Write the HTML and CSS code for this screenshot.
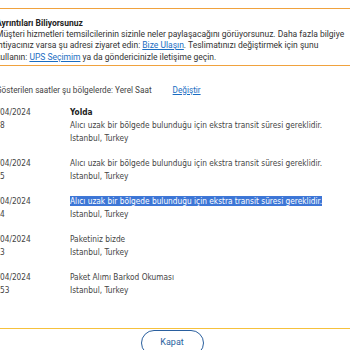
FILE: index.html
```html
<!DOCTYPE html>
<html lang="tr">

<head>
    <meta charset="UTF-8">
    <meta name="viewport" content="width=device-width, initial-scale=1.0">
    <title>Gönderi Ayrıntıları</title>
    <link rel="stylesheet" href="styles.css">
</head>

<body>
    <div class="page">
        <!-- Bilgi kutusu -->
        <section class="notice">
            <div class="notice-body">
                <h3 class="notice-title">Ayrıntıları Biliyorsunuz</h3>
                <p class="notice-text">
                    Müşteri hizmetleri temsilcilerinin sizinle neler paylaşacağını görüyorsunuz. Daha fazla bilgiye<br>
                    ihtiyacınız varsa şu adresi ziyaret edin: <a href="#">Bize Ulaşın</a>. Teslimatınızı değiştirmek için şunu<br>
                    kullanın: <a href="#">UPS Seçimim</a> ya da göndericinizle iletişime geçin.
                </p>
            </div>
        </section>

        <p class="timezone">Gösterilen saatler şu bölgelerde: Yerel Saat <a href="#" class="change">Değiştir</a></p>

        <!-- Gönderi geçmişi -->
        <div class="history">
            <div class="row">
                <div class="when">17/04/2024<br>9:58</div>
                <div class="what">
                    <strong>Yolda</strong><br>
                    Alıcı uzak bir bölgede bulunduğu için ekstra transit süresi gereklidir.<br>
                    Istanbul, Turkey
                </div>
            </div>
            <div class="row">
                <div class="when">16/04/2024<br>9:55</div>
                <div class="what">
                    Alıcı uzak bir bölgede bulunduğu için ekstra transit süresi gereklidir.<br>
                    Istanbul, Turkey
                </div>
            </div>
            <div class="row">
                <div class="when">15/04/2024<br>9:54</div>
                <div class="what">
                    <span class="selected">Alıcı uzak bir bölgede bulunduğu için ekstra transit süresi gereklidir.</span><br>
                    Istanbul, Turkey
                </div>
            </div>
            <div class="row">
                <div class="when">12/04/2024<br>9:03</div>
                <div class="what">
                    Paketiniz bizde<br>
                    Istanbul, Turkey
                </div>
            </div>
            <div class="row">
                <div class="when">11/04/2024<br>10:53</div>
                <div class="what">
                    Paket Alımı Barkod Okuması<br>
                    Istanbul, Turkey
                </div>
            </div>
        </div>

        <footer class="actions">
            <button class="close-button">Kapat</button>
        </footer>
    </div>
</body>

</html>
```
FILE: styles.css
```css
/* Genel */
body {
    margin: 0;
    padding: 0;
    background-color: #fff;
    font-family: Roboto, "Liberation Sans", sans-serif;
    color: #333;
    overflow: hidden;
}

.page {
    padding-top: 8px;
}

a {
    color: #1a6dc2;
    text-decoration: underline;
}

/* Bilgi kutusu */
.notice {
    border-top: 1px solid #f0a23e;
    border-bottom: 1px solid #f0a23e;
    padding: 8px 0 2px;
}

.notice-body {
    margin-left: -4px;
    white-space: nowrap;
}

.notice-title {
    margin: 0;
    font-size: 8.5px;
    line-height: 12px;
    font-weight: bold;
    color: #222;
}

.notice-text {
    margin: 0;
    font-size: 8.5px;
    line-height: 11.3px;
    color: #333;
}

/* Saat dilimi */
.timezone {
    margin: 18px 0 0 -4px;
    font-size: 8.2px;
    line-height: 12px;
    color: #444;
    white-space: nowrap;
}

.change {
    margin-left: 19px;
}

/* Geçmiş */
.history {
    margin: 10.5px 0 0 -12px;
    font-family: "DejaVu Sans Condensed", "DejaVu Sans", sans-serif;
    font-size: 8.25px;
    line-height: 13px;
    color: #444;
}

.row {
    display: grid;
    grid-template-columns: 82px 1fr;
    padding-bottom: 12px;
    white-space: nowrap;
}

.what strong {
    color: #222;
}

.selected {
    background-color: #3d76d6;
    color: #fff;
}

/* Alt kısım */
.actions {
    margin-top: 18.5px;
    border-top: 1px solid #f6c13c;
    display: flex;
    justify-content: center;
    padding-top: 1px;
}

.close-button {
    margin-left: -6px;
    width: 63px;
    height: 26px;
    border: 1.5px solid #2a5f9e;
    border-radius: 13px;
    background-color: #fff;
    color: #2a5f9e;
    font-family: Roboto, "Liberation Sans", sans-serif;
    font-size: 9px;
    padding: 0 0 2px;
}
```
